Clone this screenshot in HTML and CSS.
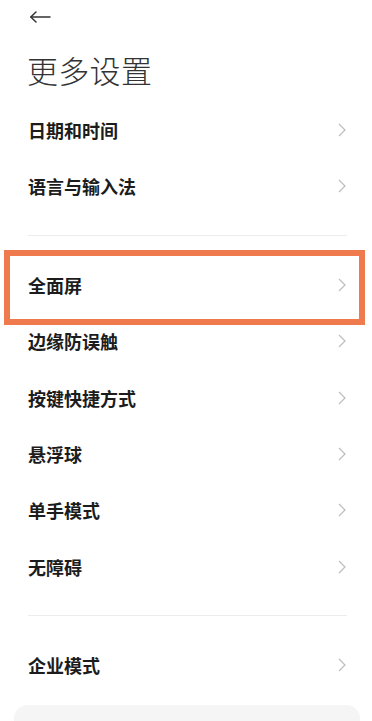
FILE: index.html
```html
<!DOCTYPE html>
<html lang="zh-CN">
<head>
<meta charset="utf-8">
<title>更多设置</title>
<link rel="stylesheet" href="styles.css">
</head>
<body>
<div class="page">
  <header class="topbar">
    <svg class="back" width="22" height="12" viewBox="0 0 22 12" fill="none" stroke="#333" stroke-width="1.5" stroke-linecap="round" stroke-linejoin="round">
      <path d="M21 6H2"/><path d="M7 1L1.8 6L7 11"/>
    </svg>
  </header>
  <h1 class="title">更多设置</h1>

  <ul class="list">
    <li class="row"><span>日期和时间</span><svg class="chev" width="8" height="14" viewBox="0 0 8 14"><path d="M1 1l6 6-6 6" fill="none" stroke="#bdbdbd" stroke-width="1.2"/></svg></li>
    <li class="row"><span>语言与输入法</span><svg class="chev" width="8" height="14" viewBox="0 0 8 14"><path d="M1 1l6 6-6 6" fill="none" stroke="#bdbdbd" stroke-width="1.2"/></svg></li>
  </ul>
  <div class="divider"></div>
  <ul class="list">
    <li class="row highlighted"><span>全面屏</span><svg class="chev" width="8" height="14" viewBox="0 0 8 14"><path d="M1 1l6 6-6 6" fill="none" stroke="#bdbdbd" stroke-width="1.2"/></svg></li>
    <li class="row"><span>边缘防误触</span><svg class="chev" width="8" height="14" viewBox="0 0 8 14"><path d="M1 1l6 6-6 6" fill="none" stroke="#bdbdbd" stroke-width="1.2"/></svg></li>
    <li class="row"><span>按键快捷方式</span><svg class="chev" width="8" height="14" viewBox="0 0 8 14"><path d="M1 1l6 6-6 6" fill="none" stroke="#bdbdbd" stroke-width="1.2"/></svg></li>
    <li class="row"><span>悬浮球</span><svg class="chev" width="8" height="14" viewBox="0 0 8 14"><path d="M1 1l6 6-6 6" fill="none" stroke="#bdbdbd" stroke-width="1.2"/></svg></li>
    <li class="row"><span>单手模式</span><svg class="chev" width="8" height="14" viewBox="0 0 8 14"><path d="M1 1l6 6-6 6" fill="none" stroke="#bdbdbd" stroke-width="1.2"/></svg></li>
    <li class="row"><span>无障碍</span><svg class="chev" width="8" height="14" viewBox="0 0 8 14"><path d="M1 1l6 6-6 6" fill="none" stroke="#bdbdbd" stroke-width="1.2"/></svg></li>
  </ul>
  <div class="divider"></div>
  <ul class="list">
    <li class="row"><span>企业模式</span><svg class="chev" width="8" height="14" viewBox="0 0 8 14"><path d="M1 1l6 6-6 6" fill="none" stroke="#bdbdbd" stroke-width="1.2"/></svg></li>
  </ul>
  <div class="card"></div>
</div>
</body>
</html>
```

FILE: styles.css
```css
* { box-sizing: border-box; }
html, body { margin: 0; padding: 0; background: #fff; }
body {
  font-family: "Noto Sans CJK SC", "Noto Sans", sans-serif;
  color: #111;
  overflow: hidden;
}
.page {
  width: 372px;
  height: 721px;
  overflow: hidden;
  display: flex;
  flex-direction: column;
}
.page > * { flex-shrink: 0; }
.topbar {
  height: 30px;
  padding: 11px 0 0 29px;
  display: flex;
  align-items: flex-start;
}
.back { display: block; }
.title {
  margin: 20px 0 0 0;
  padding-left: 27px;
  font-size: 31px;
  line-height: 40px;
  font-weight: 300;
  color: #333;
  letter-spacing: 0.3px;
}
.list {
  list-style: none;
  margin: 0;
  padding: 0;
}
.list:first-of-type { margin-top: 11.8px; }
.row {
  position: relative;
  height: 56.4px;
  padding: 0 26px 0 28px;
  display: flex;
  align-items: center;
  justify-content: space-between;
  font-size: 18px;
  font-weight: 600;
  color: #1c1c1c;
}
.chev { display: block; }
.highlighted::after {
  content: "";
  position: absolute;
  top: -7px;
  left: 4px;
  right: 7px;
  height: 63px;
  border: 6px solid #ef7a4e;
}
.divider {
  height: 1px;
  margin: 20px 25px 21px 28px;
  background: #ececec;
}
.card {
  margin: 12px 12px 0 14px;
  height: 60px;
  background: #f5f5f5;
  border-radius: 14px;
}
```
